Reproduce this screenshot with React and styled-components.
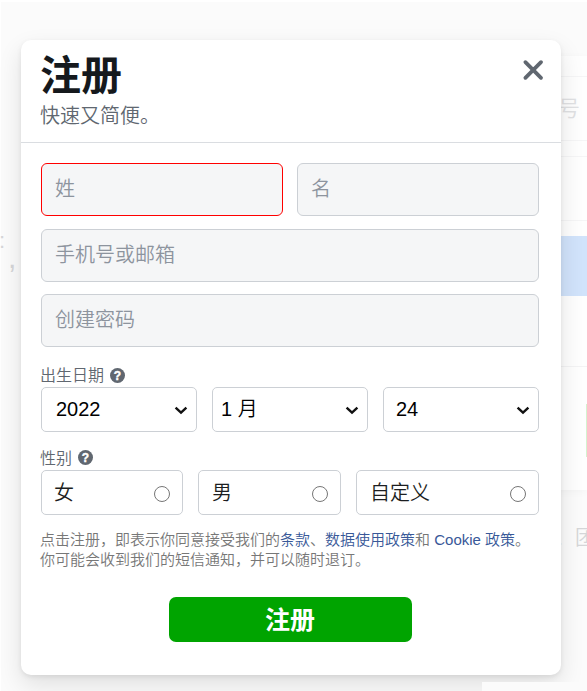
import React, { useState } from 'react';
import styled, { createGlobalStyle } from 'styled-components';

const GlobalStyle = createGlobalStyle`
  * {
    box-sizing: border-box;
  }

  body {
    margin: 0;
    background: #fff;
    font-family: "Liberation Sans", "Noto Sans CJK SC", sans-serif;
    font-weight: 350;
  }
`;

const Page = styled.main`
  position: relative;
  width: 587px;
  height: 691px;
  padding: 40px 26px 0 21px;
  overflow: hidden;
`;

// Faded login page that stays visible behind the dialog
const Backdrop = styled.div`
  position: absolute;
  inset: 2px 0 0 1px;
  background: #fbfbfb;
`;

const LoginPanel = styled.div`
  position: absolute;
  top: 54px;
  left: 460px;
  right: 0;
  height: 434px;
  padding-top: 20px;
  background: #fefefe;
  box-shadow: 0 2px 8px rgba(0, 0, 0, 0.03);
`;

const GhostField = styled.div`
  height: 65px;
  margin-bottom: 15px;
  padding: 15px 7px 0 0;
  border: solid #f5f5f6;
  border-width: 1px 0;
  color: #e0e1e3;
  font-size: 22px;
  line-height: 34px;
  text-align: right;
`;

const GhostLogin = styled.div`
  height: 60px;
  background: #d1e3fb;
`;

const GhostDivider = styled.div`
  height: 1px;
  margin-top: 70px;
  background: #f3f3f4;
`;

const GhostCreate = styled.div`
  width: 1px;
  height: 53px;
  margin: 37px 0 0 auto;
  background: #d5f2cf;
`;

const GhostText = styled.span`
  position: absolute;
  top: ${({ $top }) => $top}px;
  left: ${({ $left }) => $left}px;
  color: #d5d6d8;
  font-size: ${({ $size }) => $size}px;
  line-height: 1;
  white-space: nowrap;
`;

const Footer = styled.div`
  position: absolute;
  right: 0;
  bottom: 0;
  width: 105px;
  height: 9px;
  background: #fbfbfb;
`;

const Dialog = styled.section`
  position: relative;
  height: 635px;
  border-radius: 10px;
  background: #fff;
  box-shadow: 0 2px 5px rgba(0, 0, 0, 0.08), 0 10px 25px rgba(0, 0, 0, 0.11);
`;

const Header = styled.header`
  display: flex;
  justify-content: space-between;
  height: 103px;
  padding: 12px 17px 0 19px;
  border-bottom: 1px solid #dadde1;
`;

const Title = styled.h1`
  margin: 0;
  color: #15191d;
  font-size: 41px;
  font-weight: 700;
  line-height: 49px;
`;

const Subtitle = styled.p`
  margin: 0;
  color: #606770;
  font-size: 20px;
  line-height: 31px;
`;

const CloseButton = styled.button`
  width: 22px;
  height: 22px;
  margin-top: 7px;
  padding: 0;
  border: 0;
  background: none;
  cursor: pointer;

  svg {
    display: block;
  }
`;

const Form = styled.form`
  display: flex;
  flex-direction: column;
  padding: 20px 22px 0 20px;
`;

const FieldGrid = styled.div`
  display: grid;
  grid-template-columns: 1fr 1fr;
  gap: 13px 14px;
`;

const Input = styled.input`
  width: 100%;
  height: 53px;
  margin-top: ${({ $raised }) => ($raised ? '-1px' : '0')};
  grid-column: ${({ $wide }) => ($wide ? '1 / -1' : 'auto')};
  padding: 0 13px 1px;
  border: 1px solid ${({ $invalid }) => ($invalid ? '#ff0000' : '#ccd0d5')};
  border-radius: 6px;
  outline: none;
  background: #f5f6f7;
  font: inherit;
  font-size: 20px;

  &::placeholder {
    color: #8d949e;
    opacity: 1;
  }
`;

const Label = styled.div`
  display: flex;
  align-items: center;
  gap: 6px;
  height: ${({ $height }) => $height}px;
  margin-top: ${({ $top }) => $top}px;
  margin-left: -1px;
  padding-bottom: 2px;
  color: #606770;
  font-size: 16px;
`;

const HelpIcon = styled.svg`
  display: block;
  width: 15px;
  height: 15px;
  margin-top: 2px;
`;

const HelpMark = styled.text`
  fill: #fff;
  stroke: #fff;
  stroke-width: 0.4px;
  font-family: "Liberation Sans", sans-serif;
  font-size: 12px;
  font-weight: 700;
  text-anchor: middle;
`;

const DateRow = styled.div`
  display: grid;
  grid-template-columns: repeat(3, 1fr);
  gap: 15px;
`;

const SelectBox = styled.button`
  display: flex;
  align-items: center;
  justify-content: space-between;
  height: 45px;
  padding: 0 8px 0 ${({ $indent }) => $indent}px;
  border: 1px solid #ccd0d5;
  border-radius: 5px;
  background: #fff;
  color: #000;
  font: inherit;
  font-size: 20px;
  line-height: 43px;
`;

const GenderRow = styled.div`
  display: grid;
  grid-template-columns: 142px 143px 183px;
  gap: 15px;
`;

const GenderOption = styled.label`
  display: flex;
  align-items: center;
  justify-content: space-between;
  height: 45px;
  padding: 2px 12px 0 ${({ $indent }) => $indent}px;
  border: 1px solid #ccd0d5;
  border-radius: 5px;
  color: #1c1e21;
  font-size: 20px;
  line-height: 41px;
`;

const Radio = styled.input`
  appearance: none;
  width: 16px;
  height: 16px;
  margin: 0;
  border: 1px solid #767676;
  border-radius: 50%;

  &:checked {
    border: 5px solid #1877f2;
  }
`;

const Terms = styled.p`
  margin: 15px 0 0 -1px;
  color: #777;
  font-size: 15px;
  line-height: 20px;
  white-space: nowrap;
`;

const TermsLink = styled.a`
  color: #385898;
  text-decoration: none;
`;

const Submit = styled.button`
  align-self: center;
  width: 243px;
  height: 45px;
  margin: 27px 0 0 1px;
  padding: 1px 1px 0 0;
  border: 0;
  border-radius: 7px;
  background: #00a400;
  color: #fff;
  font: inherit;
  font-size: 25px;
  font-weight: 700;
  line-height: 44px;
  cursor: pointer;
`;

const Help = () => (
  <HelpIcon viewBox="0 0 15 15">
    <circle cx="7.5" cy="7.5" r="7.5" fill="#606770" />
    <HelpMark x="7.5" y="11.8">?</HelpMark>
  </HelpIcon>
);

const Chevron = () => (
  <svg width="14" height="10" viewBox="0 0 14 10" fill="none">
    <path d="M1.6 2.7 7 7.7l5.4-5" stroke="#111" strokeWidth="2.4" />
  </svg>
);

const dates = [
  { value: '2022', indent: 14 },
  { value: '1 月', indent: 8 },
  { value: '24', indent: 12 },
];

const genders = [
  { value: '女', indent: 12 },
  { value: '男', indent: 13 },
  { value: '自定义', indent: 13 },
];

const App = () => {
  const [gender, setGender] = useState('');

  return (
    <>
      <GlobalStyle />
      <Page>
        <Backdrop>
          <LoginPanel>
            <GhostField>号</GhostField>
            <GhostField />
            <GhostLogin />
            <GhostDivider />
            <GhostCreate />
          </LoginPanel>
          <GhostText $top={228} $left={-2} $size={22}>:</GhostText>
          <GhostText $top={241} $left={7} $size={30}>,</GhostText>
          <GhostText $top={526} $left={554} $size={19}>、</GhostText>
          <GhostText $top={526} $left={574} $size={20}>团</GhostText>
        </Backdrop>
        <Dialog>
          <Header>
            <div>
              <Title>注册</Title>
              <Subtitle>快速又简便。</Subtitle>
            </div>
            <CloseButton type="button" aria-label="关闭">
              <svg width="22" height="22" viewBox="0 0 22 22">
                <path d="m3.4 3.2 15.6 15.6M19 3.2 3.4 18.8" stroke="#606770" strokeWidth="3.8" strokeLinecap="round" />
              </svg>
            </CloseButton>
          </Header>
          <Form onSubmit={(e) => e.preventDefault()}>
            <FieldGrid>
              <Input placeholder="姓" name="lastname" $invalid />
              <Input placeholder="名" name="firstname" />
              <Input placeholder="手机号或邮箱" name="contact" $wide />
              <Input placeholder="创建密码" name="password" type="password" $wide $raised />
            </FieldGrid>
            <Label $top={16} $height={24}>出生日期 <Help /></Label>
            <DateRow>
              {dates.map(({ value, indent }) => (
                <SelectBox type="button" key={value} $indent={indent}>
                  {value}
                  <Chevron />
                </SelectBox>
              ))}
            </DateRow>
            <Label $top={13} $height={25}>性别 <Help /></Label>
            <GenderRow>
              {genders.map(({ value, indent }) => (
                <GenderOption key={value} $indent={indent}>
                  {value}
                  <Radio
                    type="radio"
                    name="gender"
                    checked={gender === value}
                    onChange={() => setGender(value)}
                  />
                </GenderOption>
              ))}
            </GenderRow>
            <Terms>
              点击注册，即表示你同意接受我们的<TermsLink href="#">条款</TermsLink>、
              <TermsLink href="#">数据使用政策</TermsLink>和 <TermsLink href="#">Cookie 政策</TermsLink>。
              <br />
              你可能会收到我们的短信通知，并可以随时退订。
            </Terms>
            <Submit type="submit">注册</Submit>
          </Form>
        </Dialog>
        <Footer />
      </Page>
    </>
  );
};

export default App;
